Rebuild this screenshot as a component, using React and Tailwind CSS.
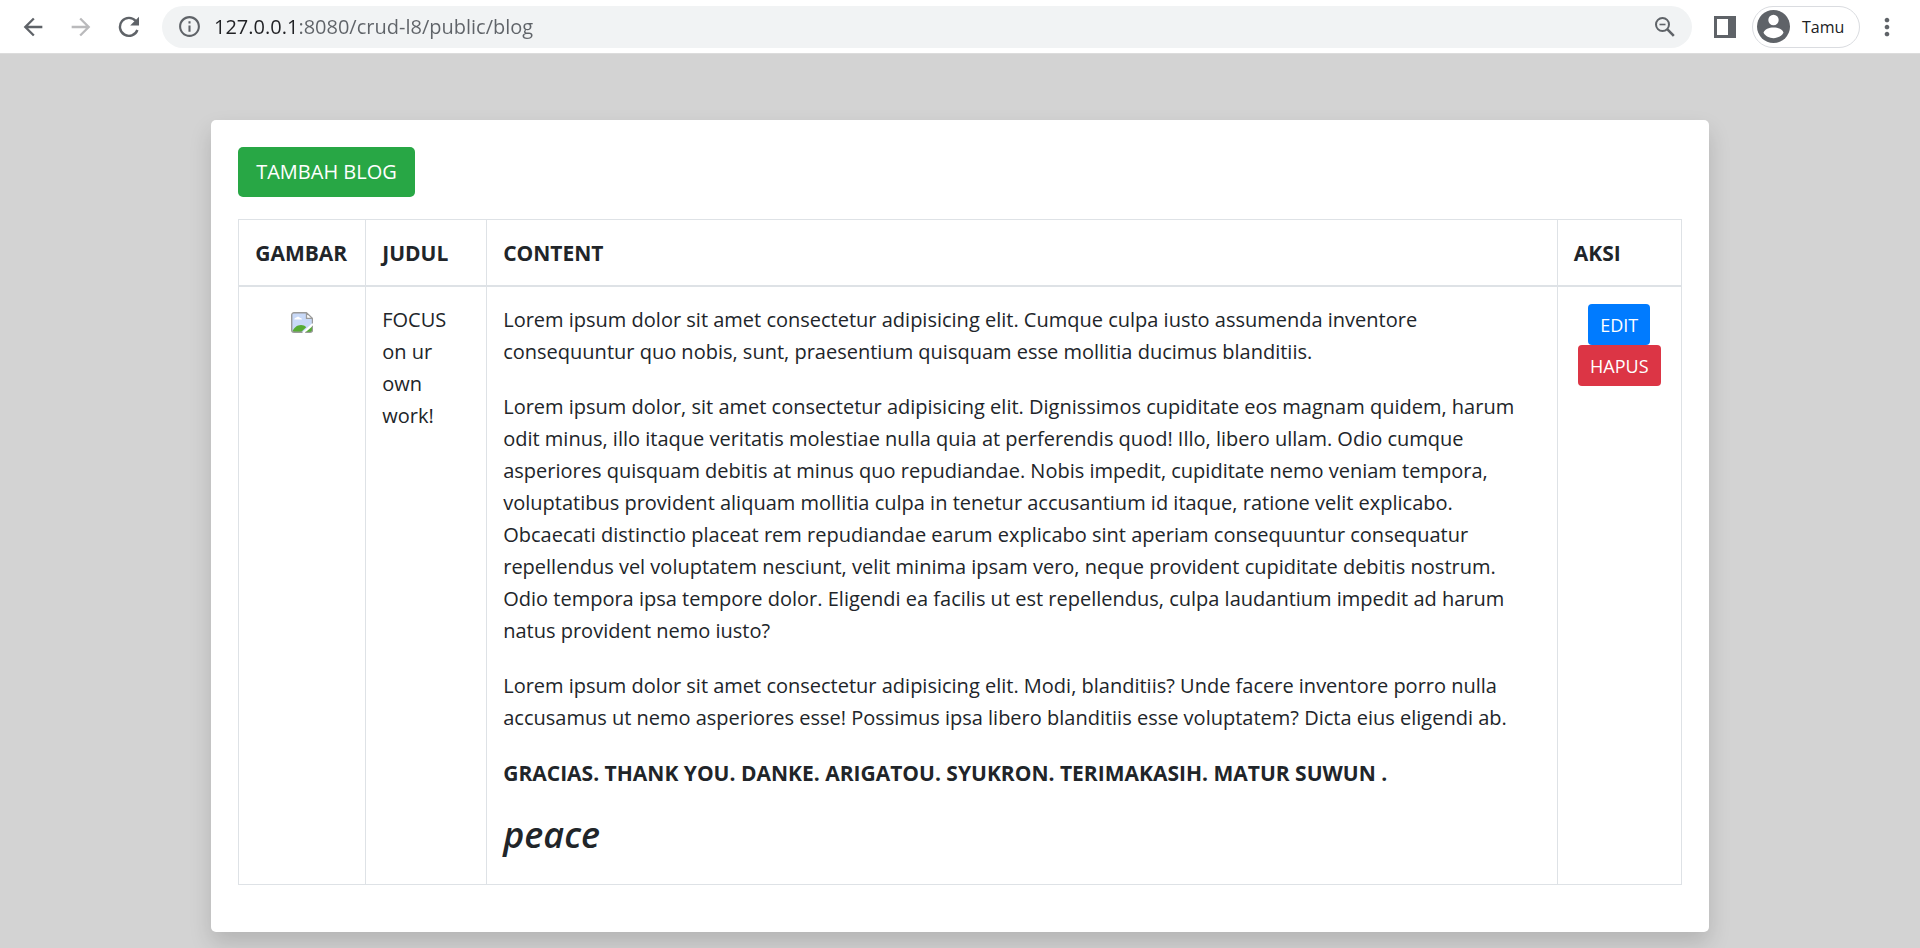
import React from "react";
import { MdArrowBack, MdArrowForward, MdInfoOutline, MdMoreVert } from "react-icons/md";

function ReloadIcon() {
  return (
    <svg viewBox="0 0 22 22" className="size-[22px]" fill="none" aria-hidden="true">
      <path d="M17.800 5A9 9 0 1 0 19.400 14" stroke="#5f6368" strokeWidth="2.400" />
      <path d="M21 .8v8.800h-8.800z" fill="#5f6368" />
    </svg>
  );
}

function ZoomOutIcon() {
  return (
    <svg viewBox="0 0 20 20" className="size-5" fill="none" stroke="#5f6368" aria-hidden="true">
      <circle cx="7.500" cy="7.500" r="6.500" strokeWidth="2" />
      <path d="M4.500 7.500h6" strokeWidth="1.600" />
      <path d="M12.200 12.200l6.600 6.600" strokeWidth="2.600" />
    </svg>
  );
}

function SidePanelIcon() {
  return (
    <svg viewBox="0 0 22 22" className="size-[22px]" aria-hidden="true">
      <path fillRule="evenodd" fill="#5f6368" d="M0 0h22v22H0zM3 3v16h11V3z" />
    </svg>
  );
}

function AvatarIcon() {
  return (
    <svg viewBox="0 0 33 33" className="size-[33px]" aria-hidden="true">
      <circle cx="16.500" cy="16.500" r="16.500" fill="#5f6368" />
      <circle cx="16.500" cy="10" r="5.200" fill="#fff" />
      <path d="M6.500 22.800c1-3.600 5.600-5.300 10-5.300s9 1.700 10 5.300c-2 3.300-5.800 5.400-10 5.400s-8-2.100-10-5.400z" fill="#fff" />
    </svg>
  );
}

function BrokenImageIcon() {
  return (
    <svg viewBox="0 0 22 21" className="h-[21px] w-[22px]" role="img" aria-label="Gambar">
      <path d="M3 .7h12.500l6 6V11L11.500 20.300H3A2.300 2.300 0 0 1 .7 18V3A2.300 2.300 0 0 1 3 .7z" fill="#c8d9f8" />
      <path d="M3.300 7.500c0-1.300 1-1.800 1.900-1.700.4-1.300 3.200-1.600 3.700.1 1.300-.1 2.100.6 2.100 1.600z" fill="#fff" />
      <path d="M1.500 19.600c1-3.700 4.500-6.600 8.500-6.600 2 0 4 .8 5.200 2.200l-5 4.700H3z" fill="#56ac35" />
      <path d="M21.500 11.500V7M11.500 20.300H3A2.300 2.300 0 0 1 .7 18V3A2.300 2.300 0 0 1 3 .7h12.500" stroke="#9a9a9a" strokeWidth="1.400" fill="none" />
      <path d="M15.500.7v5.700h6z" fill="#fff" stroke="#9a9a9a" strokeWidth="1.300" strokeLinejoin="round" />
      <path d="M14.500 20.300l7-6v3.700a2.300 2.300 0 0 1-2.300 2.300z" fill="#56ac35" />
      <path d="M21.500 13.800V18a2.300 2.300 0 0 1-2.300 2.300h-5" stroke="#9a9a9a" strokeWidth="1.300" fill="none" />
    </svg>
  );
}

function Toolbar() {
  return (
    <header className="flex h-[54px] items-center border-b border-[#dcdcdc] bg-white text-[#5f6368]">
      <nav className="flex w-[162px] shrink-0 items-center gap-5 pl-[19px]" aria-label="Navigasi">
        <button type="button" aria-label="Kembali"><MdArrowBack size={28} /></button>
        <button type="button" aria-label="Maju" className="text-[#bababc]"><MdArrowForward size={28} /></button>
        <button type="button" aria-label="Muat ulang" className="pl-[3px]"><ReloadIcon /></button>
      </nav>
      <div className="flex h-[42px] grow items-center rounded-full bg-[#f1f3f4] pr-[17px] pl-[15px]">
        <MdInfoOutline size={25} />
        <input
          type="text"
          aria-label="Alamat"
          defaultValue="127.0.0.1:8080/crud-l8/public/blog"
          className="ml-3 grow bg-[linear-gradient(90deg,#202124_83px,#5f6368_83px)] bg-clip-text text-[20px] leading-8 text-transparent outline-none"
        />
        <button type="button" aria-label="Perkecil"><ZoomOutIcon /></button>
      </div>
      <button type="button" aria-label="Panel samping" className="ml-[22px]"><SidePanelIcon /></button>
      <button
        type="button"
        className="ml-4 flex h-[42px] w-[108px] items-center gap-3 rounded-full border border-[#dadce0] pl-1 text-[16px] text-[#202124]"
      >
        <AvatarIcon />
        Tamu
      </button>
      <button type="button" aria-label="Menu" className="mr-[19px] ml-[13px]"><MdMoreVert size={28} /></button>
    </header>
  );
}

const th = "border border-b-2 border-[#dee2e6] px-4 pt-[17px] pb-4 text-left text-[21px] font-bold";
const td = "border border-[#dee2e6] px-4 py-[17px] align-top";

export default function App() {
  return (
    <div className="flex min-h-screen flex-col bg-[#d3d3d3] font-['Open_Sans','Noto_Sans',sans-serif] text-[20px] leading-8 text-[#212529]">
      <Toolbar />
      <main className="mx-auto mt-[66px] mb-4 w-[78%] rounded-[5px] bg-white px-[27px] pt-[27px] pb-[47px] shadow-[0_11px_22px_rgba(0,0,0,0.15)]">
        <a href="#tambah" className="inline-flex h-[50px] items-center rounded-[5px] bg-[#28a745] px-[18px] text-white">
          TAMBAH BLOG
        </a>
        <table className="mt-[22px] w-full table-fixed border-collapse border border-[#dee2e6]">
          <colgroup>
            <col className="w-[127px]" />
            <col className="w-[121px]" />
            <col />
            <col className="w-[124px]" />
          </colgroup>
          <thead>
            <tr>
              <th scope="col" className={th}>GAMBAR</th>
              <th scope="col" className={th}>JUDUL</th>
              <th scope="col" className={th}>CONTENT</th>
              <th scope="col" className={th}>AKSI</th>
            </tr>
          </thead>
          <tbody>
            <tr>
              <td className={td}>
                <div className="flex justify-center pt-2"><BrokenImageIcon /></div>
              </td>
              <td className={td}>FOCUS on ur own work!</td>
              <td className={td}>
                <p className="mb-[23px]">
                  Lorem ipsum dolor sit amet consectetur adipisicing elit. Cumque culpa iusto assumenda inventore consequuntur quo nobis, sunt, praesentium quisquam esse mollitia ducimus blanditiis.
                </p>
                <p className="mb-[23px]">
                  Lorem ipsum dolor, sit amet consectetur adipisicing elit. Dignissimos cupiditate eos magnam quidem, harum odit minus, illo itaque veritatis molestiae nulla quia at perferendis quod! Illo, libero ullam. Odio cumque asperiores quisquam debitis at minus quo repudiandae. Nobis impedit, cupiditate nemo veniam tempora, voluptatibus provident aliquam mollitia culpa in tenetur accusantium id itaque, ratione velit explicabo. Obcaecati distinctio placeat rem repudiandae earum explicabo sint aperiam consequuntur consequatur repellendus vel voluptatem nesciunt, velit minima ipsam vero, neque provident cupiditate debitis nostrum. Odio tempora ipsa tempore dolor. Eligendi ea facilis ut est repellendus, culpa laudantium impedit ad harum natus provident nemo iusto?
                </p>
                <p className="mb-[23px]">
                  Lorem ipsum dolor sit amet consectetur adipisicing elit. Modi, blanditiis? Unde facere inventore porro nulla accusamus ut nemo asperiores esse! Possimus ipsa libero blanditiis esse voluptatem? Dicta eius eligendi ab.
                </p>
                <p className="mb-[23px] text-[21px] font-bold">
                  GRACIAS. THANK YOU. DANKE. ARIGATOU. SYUKRON. TERIMAKASIH. MATUR SUWUN .
                </p>
                <h3 className="mb-[10px] text-[36px] leading-[45px] font-semibold italic">peace</h3>
              </td>
              <td className={td}>
                <div className="flex flex-col items-center text-[18px] text-white">
                  <a href="#edit" className="flex h-[41px] items-center rounded-[4px] bg-[#007bff] px-3">EDIT</a>
                  <button type="button" className="h-[41px] rounded-[4px] bg-[#dc3545] px-3">HAPUS</button>
                </div>
              </td>
            </tr>
          </tbody>
        </table>
      </main>
    </div>
  );
}
